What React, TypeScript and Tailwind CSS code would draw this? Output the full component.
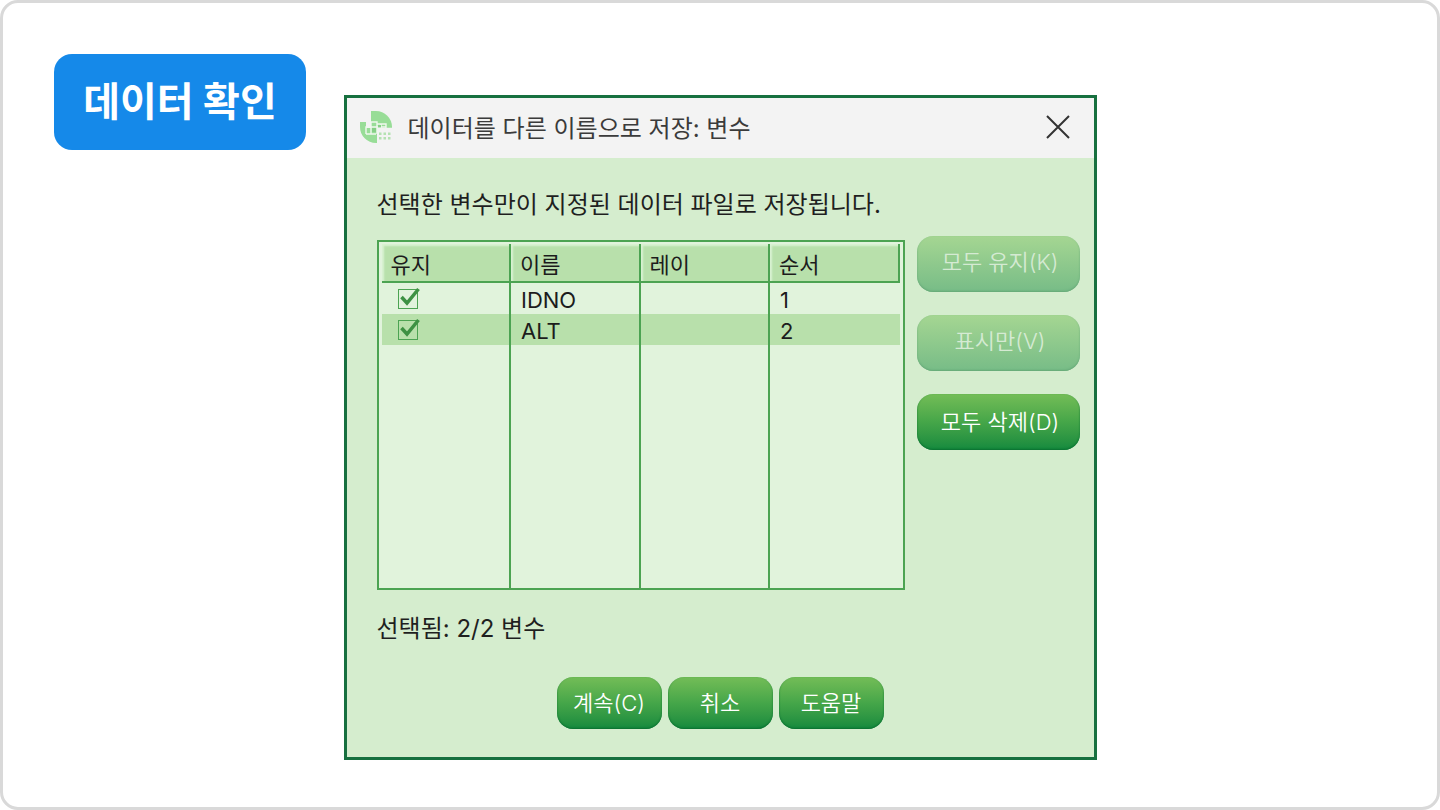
import { useState } from 'react'

interface Variable {
  name: string
  label: string
  order: number
}

const variables: Variable[] = [
  { name: 'IDNO', label: '', order: 1 },
  { name: 'ALT', label: '', order: 2 }
]

const LogoIcon = () => (
  <svg viewBox="0 0 32 32" className="w-8 h-8 shrink-0" aria-hidden="true">
    {/* Two opposite quarters of the disc */}
    <path d="M11 0h5a16 16 0 0 1 16 16v1H11z" fill="#98dd97" />
    <path d="M0 11h6v6h5v-2h6v17h-1A16 16 0 0 1 0 16z" fill="#98dd97" />
    {/* Steps in the middle */}
    <path
      d="M6 23v-7h5v-5h6v2h9v4M11 16v7M6 23h10M17 13v10M11 16h15M21 13v4"
      stroke="#f0f8ee"
      strokeWidth="1.400"
      fill="none"
    />
    <path d="M12 17h4v4h-4zM18 14h3v2.500h-3z" fill="#86cf86" />
    <path d="M17 17.500h15" stroke="#f3f3f3" strokeWidth="1.500" />
    <path
      d="M19 21.500h2.500v2.500h-2.500zM23.500 21.500h2.500v2.500h-2.500zM28 21.500h2.500v2.500h-2.500zM19 26h2.500v2.500h-2.500zM23.500 26h2.500v2.500h-2.500zM28 26h2.500v2.500h-2.500z"
      fill="#b4e2b2"
    />
  </svg>
)

interface GreenButtonProps {
  children: string
  size: 'side' | 'footer'
  disabled?: boolean
}

const GreenButton = ({ children, size, disabled = false }: GreenButtonProps) => {
  const sizeClasses = {
    side: 'h-14 w-full pl-1',
    footer: 'h-[52px] w-[105px]'
  }
  const stateClasses = disabled
    ? 'from-[#a5d692] to-[#77bc87] text-[#d5ead3] pb-1 shadow-[inset_0_-1px_2px_#65a877]'
    : 'from-[#73bd57] via-[#45a649] to-[#128a3e] text-white shadow-[inset_0_-1px_2px_#0a7030]'

  return (
    <button
      type="button"
      disabled={disabled}
      className={`flex items-center justify-center rounded-2xl bg-linear-to-b text-[22px] leading-8 font-[350] whitespace-nowrap ${sizeClasses[size]} ${stateClasses}`}
    >
      {children}
    </button>
  )
}

interface KeepCheckboxProps {
  label: string
  checked: boolean
  onChange: () => void
}

const KeepCheckbox = ({ label, checked, onChange }: KeepCheckboxProps) => (
  <label className="relative block w-5 h-5">
    <input
      type="checkbox"
      aria-label={label}
      checked={checked}
      onChange={onChange}
      className="block appearance-none w-5 h-5 border-[1px] border-[#4ca352] bg-transparent"
    />
    {checked && (
      <svg viewBox="0 0 24 24" className="absolute -top-1 left-0 w-6 h-6 pointer-events-none" aria-hidden="true">
        <path d="M3.500 12l5.500 6L20.500 4" fill="none" stroke="#3d9143" strokeWidth="3.500" />
      </svg>
    )}
  </label>
)

const VariableTable = () => {
  const [kept, setKept] = useState<string[]>(variables.map((v) => v.name))

  const toggle = (name: string) =>
    setKept(kept.includes(name) ? kept.filter((n) => n !== name) : [...kept, name])

  const line = 'border-r-2 border-[#4ca352]'
  const head = `h-[39px] pt-1 pl-[9px] text-left font-normal border-b-2 bg-[#b8e0ab] shadow-[inset_2px_2px_2px_#d9f2d2] ${line}`

  return (
    <div className="flex-1 min-w-0 mt-1 border-2 border-[#4ca352] bg-[#e1f3dc] px-[3px] pt-[2px]">
      <table className="w-full table-fixed border-separate border-spacing-0 text-[22px] leading-7 text-[#1c1c1c]">
        <thead>
          <tr>
            <th scope="col" className={head}>유지</th>
            <th scope="col" className={head}>이름</th>
            <th scope="col" className={head}>레이</th>
            <th scope="col" className={head}>순서</th>
          </tr>
        </thead>
        <tbody>
          {variables.map((v, i) => (
            <tr key={v.name} className={i % 2 === 1 ? 'bg-[#b8e0ab]' : ''}>
              <td className={`h-[31px] px-4 ${line}`}>
                <KeepCheckbox label={v.name} checked={kept.includes(v.name)} onChange={() => toggle(v.name)} />
              </td>
              <td className={`pl-[10px] align-bottom ${line}`}>{v.name}</td>
              <td className={`pl-[10px] align-bottom ${line}`}>{v.label}</td>
              <td className="pl-[10px] align-bottom">{v.order}</td>
            </tr>
          ))}
          {/* Empty area below the rows */}
          <tr>
            <td className={`h-[243px] ${line}`}></td>
            <td className={line}></td>
            <td className={line}></td>
            <td></td>
          </tr>
        </tbody>
      </table>
    </div>
  )
}

const SaveDialog = () => (
  <section className="border-3 border-[#17703f] bg-[#d5edce] text-[#1f1f1f]">
    <header className="flex items-center gap-4 h-[60px] pl-[13px] pr-6 pb-[2px] bg-[#f3f3f3]">
      <LogoIcon />
      <h2 className="flex-1 pt-1 text-2xl leading-9 font-normal text-[#3b3b3b]">데이터를 다른 이름으로 저장: 변수</h2>
      <button type="button" aria-label="닫기">
        <svg viewBox="0 0 24 24" className="w-6 h-6" aria-hidden="true">
          <path d="M1 1l22 22M23 1L1 23" stroke="#333333" strokeWidth="2" fill="none" />
        </svg>
      </button>
    </header>

    <div className="pl-[30px] pr-[14px] pt-[29px]">
      <p className="text-2xl leading-9">선택한 변수만이 지정된 데이터 파일로 저장됩니다.</p>
      <div className="flex items-start gap-3 mt-[13px]">
        <VariableTable />
        <div className="flex flex-col gap-[23px] w-[163px]">
          <GreenButton size="side" disabled>모두 유지(K)</GreenButton>
          <GreenButton size="side" disabled>표시만(V)</GreenButton>
          <GreenButton size="side">모두 삭제(D)</GreenButton>
        </div>
      </div>
      <p className="mt-[21px] text-2xl leading-9">선택됨: 2/2 변수</p>
    </div>

    <footer className="flex justify-center gap-[6px] pt-[30px] pb-7">
      <GreenButton size="footer">계속(C)</GreenButton>
      <GreenButton size="footer">취소</GreenButton>
      <GreenButton size="footer">도움말</GreenButton>
    </footer>
  </section>
)

export default function App() {
  return (
    <main className="min-h-screen border-3 border-[#d9d9d9] rounded-[18px] bg-white px-[51px] pt-[51px] pb-8 grid grid-cols-[1fr_minmax(0,753px)_1fr] items-start font-['Inter','Noto_Sans_CJK_KR',sans-serif]">
      <h1 className="justify-self-start w-[252px] h-24 flex items-center justify-center rounded-[18px] bg-[#1589e9] text-white text-[40px] leading-[60px] font-bold whitespace-nowrap">
        데이터 확인
      </h1>
      <div className="mt-[41px]">
        <SaveDialog />
      </div>
    </main>
  )
}
